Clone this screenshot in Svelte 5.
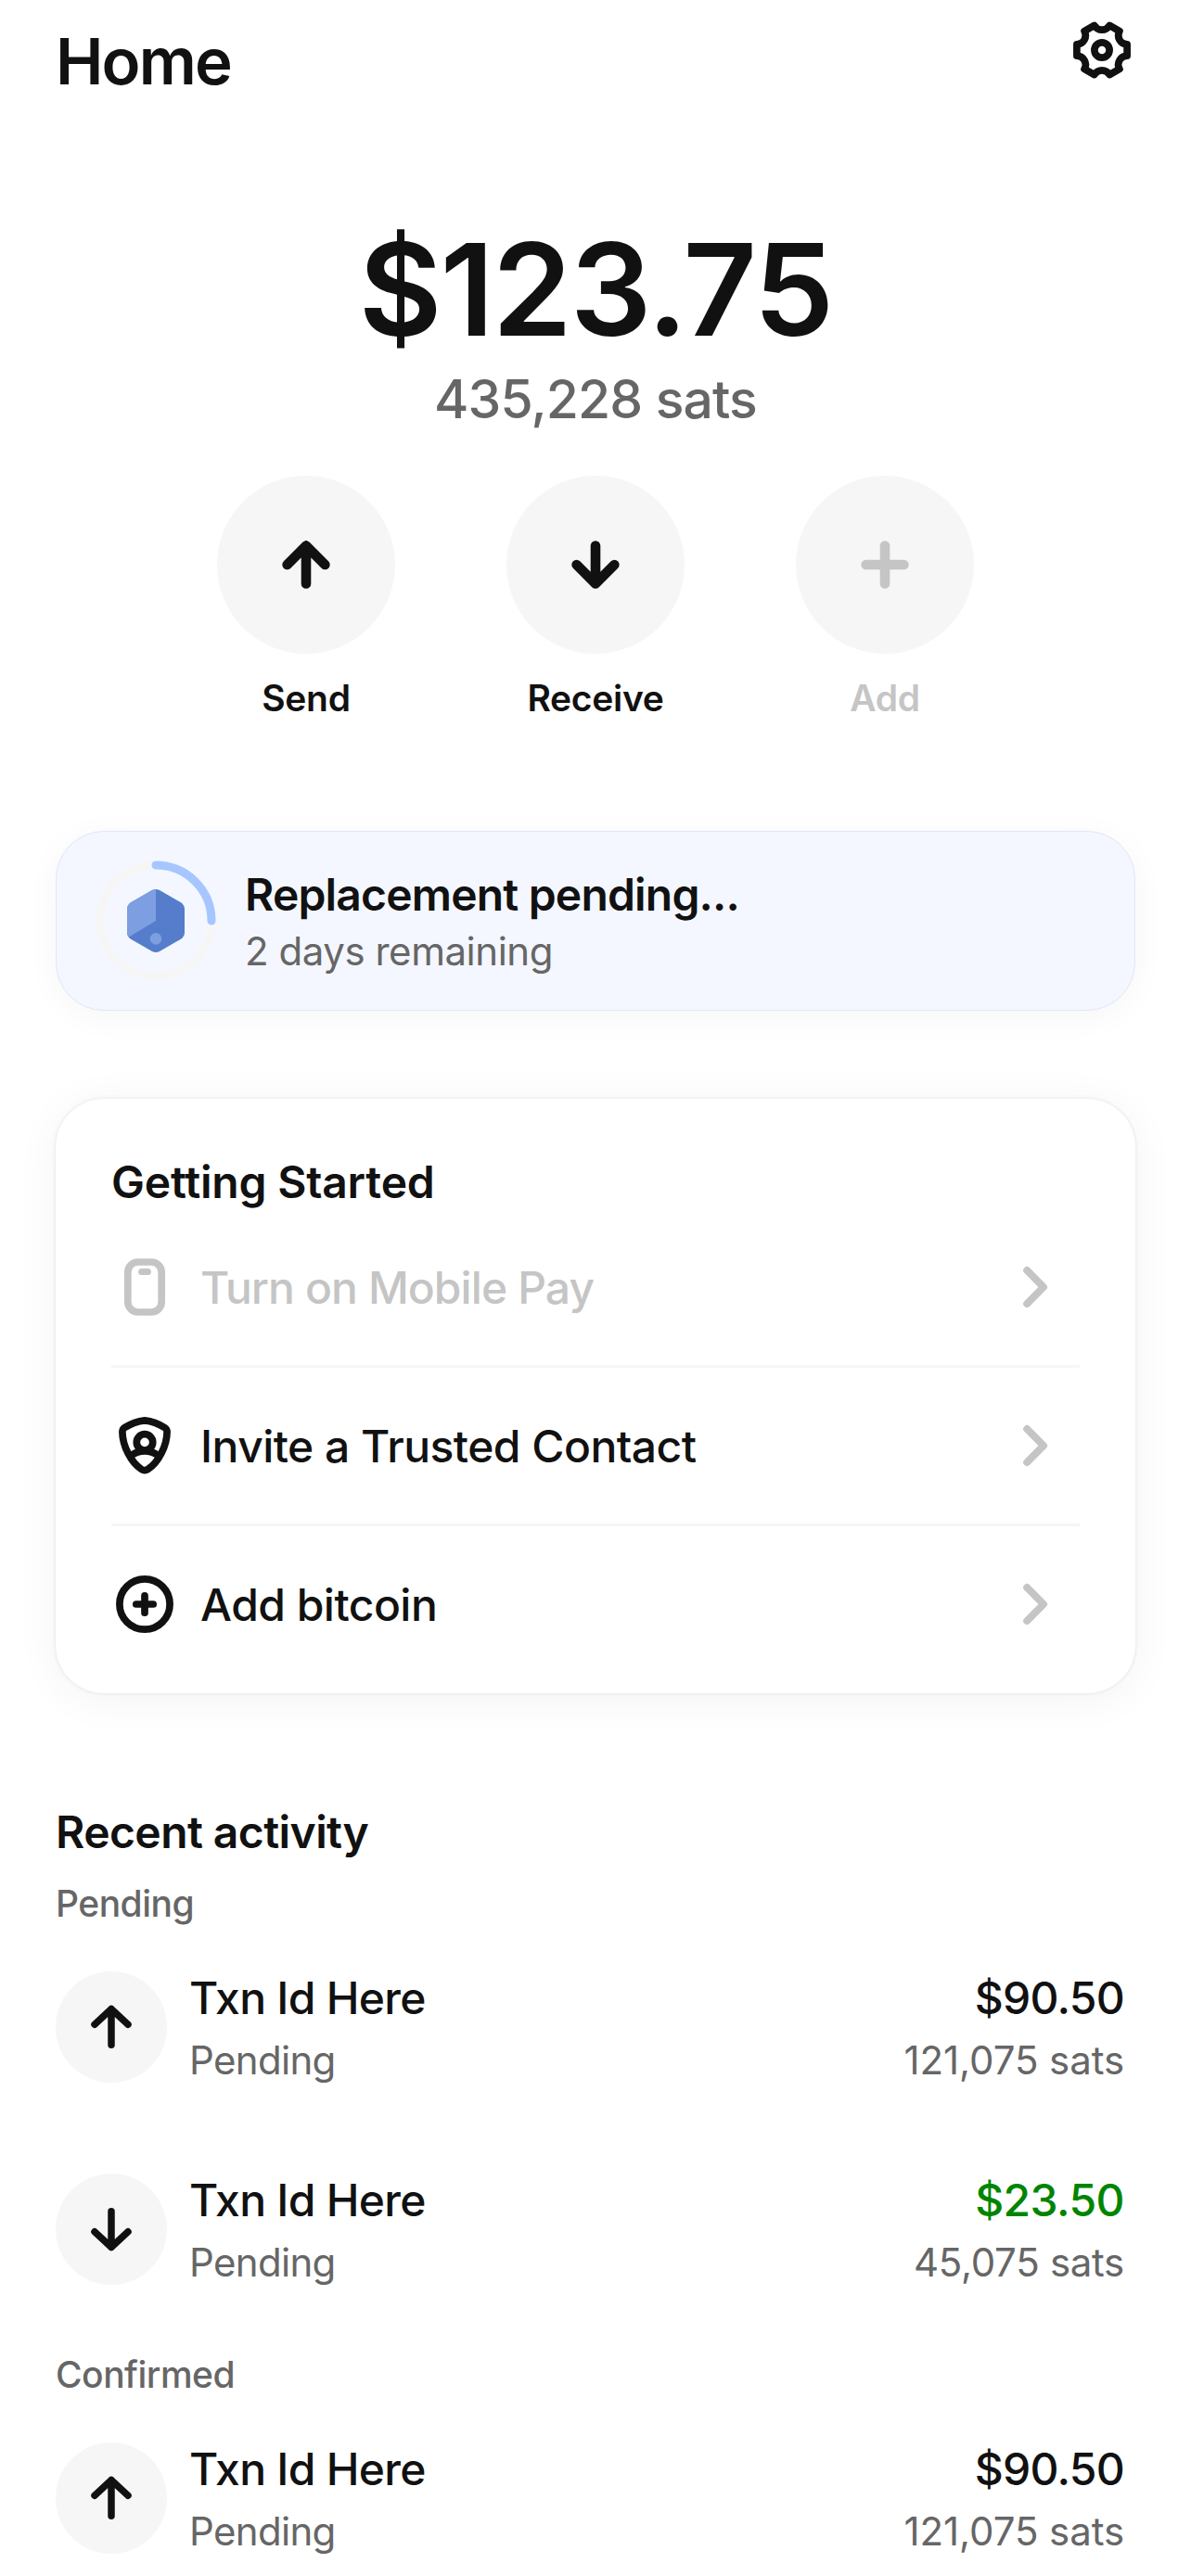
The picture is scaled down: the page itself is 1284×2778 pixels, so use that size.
<script>
  const steps = [
    { icon: 'phone', label: 'Turn on Mobile Pay', disabled: true },
    { icon: 'shield', label: 'Invite a Trusted Contact', disabled: false },
    { icon: 'plus', label: 'Add bitcoin', disabled: false }
  ];

  const actions = [
    { icon: 'up', label: 'Send', disabled: false },
    { icon: 'down', label: 'Receive', disabled: false },
    { icon: 'plus', label: 'Add', disabled: true }
  ];

  const groups = [
    {
      title: 'Pending',
      items: [
        { incoming: false, title: 'Txn Id Here', status: 'Pending', amount: '$90.50', sats: '121,075 sats' },
        { incoming: true, title: 'Txn Id Here', status: 'Pending', amount: '$23.50', sats: '45,075 sats' }
      ]
    },
    {
      title: 'Confirmed',
      items: [
        { incoming: false, title: 'Txn Id Here', status: 'Pending', amount: '$90.50', sats: '121,075 sats' }
      ]
    }
  ];

  // Six-toothed gear outline, centred in a 72 unit box.
  function gear() {
    const parts = [];
    for (let i = 0; i < 6; i++) {
      const a = (i * Math.PI) / 3;
      const at = (x, y) =>
        `${(36 + x * Math.cos(a) - y * Math.sin(a)).toFixed(2)} ${(36 + x * Math.sin(a) + y * Math.cos(a)).toFixed(2)}`;
      const start = at(27.1, -6.2);
      parts.push(i === 0 ? `M${start}` : `A9.5 9.5 0 0 0 ${start}`);
      parts.push(`L${at(27.1, 6.2)}`);
    }
    parts.push('A9.5 9.5 0 0 0 63.1 29.8Z');
    return parts.join('');
  }
</script>

<main>
  <header>
    <h1>Home</h1>
    <svg class="settings" viewBox="0 0 72 72">
      <path d={gear()} />
      <circle cx="36" cy="36" r="8.1" />
    </svg>
  </header>

  <section class="balance">
    <div class="fiat">$123.75</div>
    <div class="sats">435,228 sats</div>
  </section>

  <nav>
    {#each actions as action}
      <div class="action" class:disabled={action.disabled}>
        <span class="disc">
          <svg viewBox="0 0 72 72">
            {#if action.icon === 'up'}
              <path d="M36 56.4V15.6M15.6 36 36 15.6 56.4 36" />
            {:else if action.icon === 'down'}
              <path d="M36 15.6V56.4M15.6 36 36 56.4 56.4 36" />
            {:else}
              <path d="M36 15.6V56.4M15.6 36H56.4" />
            {/if}
          </svg>
        </span>
        <span class="caption">{action.label}</span>
      </div>
    {/each}
  </nav>

  <section class="notice">
    <svg class="progress" viewBox="0 0 130 130">
      <circle class="track" cx="65" cy="65" r="60" />
      <path class="arc" d="M65 5A60 60 0 0 1 125 65" />
      <path class="hex" d="M61 32.1Q65 30 69 32.1L92 45.3Q96 48 96 52.5V77.5Q96 82 92 84.7L69 97.9Q65 100 61 97.9L38 84.7Q34 82 34 77.5V52.5Q34 48 38 45.3L61 32.1Z" />
      <path class="facet" d="M65 65V31Q62.8 31 61 32.1L38 45.3Q34 48 34 52.5V77.5Q34 80.2 36.3 82.2Z" />
      <circle class="facet" cx="65" cy="84.4" r="6.3" />
    </svg>
    <div class="notice-text">
      <strong>Replacement pending...</strong>
      <span>2 days remaining</span>
    </div>
  </section>

  <section class="card">
    <h2>Getting Started</h2>
    <ul>
      {#each steps as step}
        <li class:disabled={step.disabled}>
          <svg class="glyph" viewBox="0 0 72 72">
            {#if step.icon === 'phone'}
              <rect x="17.8" y="9" width="36.4" height="54" rx="11" />
              <path class="slot" d="M32.6 19.4H39.4" />
            {:else if step.icon === 'shield'}
              <path d="M36 8.8C28.5 9.6 20 13 14.4 16.6Q12 18.2 11.9 21C12 36 21 54 32.6 61.6Q36 63.8 39.4 61.6C51 54 60 36 60.1 21Q60 18.2 57.6 16.6C52 13 43.5 9.6 36 8.8Z" />
              <circle cx="36" cy="32.4" r="8.7" />
              <path d="M21.5 46.5Q28 41.8 36 41.8T50.5 46.5" />
            {:else}
              <circle cx="36" cy="36" r="27.1" />
              <path d="M36 26.8V45.2M26.8 36H45.2" />
            {/if}
          </svg>
          <span class="step">{step.label}</span>
          <svg class="chevron" viewBox="0 0 72 72">
            <path d="M27.2 18 45 36 27.2 54" />
          </svg>
        </li>
      {/each}
    </ul>
  </section>

  <section class="activity">
    <h2>Recent activity</h2>
    {#each groups as group}
      <h3>{group.title}</h3>
      {#each group.items as item}
        <div class="txn">
          <span class="disc">
            <svg viewBox="0 0 72 72">
              {#if item.incoming}
                <path d="M36 16.7V55.5M18 38.8 36 55.5 54 38.8" />
              {:else}
                <path d="M36 55.3V16.5M18 33.2 36 16.5 54 33.2" />
              {/if}
            </svg>
          </span>
          <div class="lines">
            <span class="primary">{item.title}</span>
            <span class="secondary">{item.status}</span>
          </div>
          <div class="lines end" class:incoming={item.incoming}>
            <span class="primary">{item.amount}</span>
            <span class="secondary">{item.sats}</span>
          </div>
        </div>
      {/each}
    {/each}
  </section>
</main>

<style>
  :global(body) {
    background: #fff;
    overflow: hidden;
  }

  main {
    box-sizing: border-box;
    width: 1284px;
    height: 2778px;
    overflow: hidden;
    padding: 18px 60px 0;
    font-family: Inter, 'Liberation Sans', sans-serif;
    color: #111;
    white-space: nowrap;
  }

  h1,
  h2,
  h3,
  ul {
    margin: 0;
    padding: 0;
    font-weight: 600;
  }

  svg {
    display: block;
    fill: none;
    stroke: currentColor;
    stroke-linecap: round;
    stroke-linejoin: round;
  }

  header {
    display: flex;
    justify-content: space-between;
    height: 90px;
  }

  h1 {
    margin-top: 6px;
    font-size: 69px;
    line-height: 84px;
    letter-spacing: -0.027em;
  }

  .settings {
    width: 72px;
    height: 72px;
    stroke-width: 7.7;
  }

  .balance {
    margin-top: 122px;
    text-align: center;
  }

  .fiat {
    font-size: 138px;
    font-weight: 600;
    line-height: 164px;
    letter-spacing: -0.015em;
  }

  .sats {
    padding-top: 1px;
    font-size: 57px;
    font-weight: 500;
    line-height: 72px;
    letter-spacing: -0.015em;
    color: #666;
  }

  nav {
    display: flex;
    justify-content: center;
    gap: 120px;
    margin-top: 46px;
  }

  .action {
    display: flex;
    flex-direction: column;
    align-items: center;
    width: 192px;
  }

  .disc {
    display: flex;
    align-items: center;
    justify-content: center;
    flex: none;
    border-radius: 50%;
    background: #f6f6f6;
  }

  .disc svg {
    width: 72px;
    height: 72px;
  }

  .action .disc {
    width: 192px;
    height: 192px;
  }

  .action .disc svg {
    stroke-width: 10.6;
  }

  .caption {
    margin-top: 18px;
    font-size: 39px;
    font-weight: 600;
    line-height: 60px;
    letter-spacing: -0.008em;
  }

  .disabled {
    color: #c5c5c5;
  }

  .notice {
    box-sizing: border-box;
    display: flex;
    align-items: center;
    gap: 31px;
    height: 194px;
    margin-top: 113px;
    padding-left: 42px;
    border: 1px solid #dfe7f7;
    border-radius: 52px;
    background: #f4f7ff;
    box-shadow: 0 6px 36px rgba(0, 0, 0, 0.04);
  }

  .progress {
    width: 130px;
    height: 130px;
  }

  .track {
    stroke: #f6f6f6;
    stroke-width: 9;
  }

  .arc {
    stroke: #a6c6ff;
    stroke-width: 9;
  }

  .hex {
    fill: #557dcc;
    stroke: none;
  }

  .facet {
    fill: #7d9fe1;
    stroke: none;
  }

  .notice-text {
    display: flex;
    flex-direction: column;
    margin-top: 4px;
    line-height: 61px;
  }

  .notice-text strong {
    font-size: 48px;
    font-weight: 600;
    letter-spacing: -0.017em;
  }

  .notice-text span {
    font-size: 42px;
    letter-spacing: -0.011em;
    color: #666;
  }

  .card {
    box-sizing: border-box;
    height: 641px;
    margin-top: 95px;
    padding: 60px 60px 12px;
    border-radius: 52px;
    background: #fff;
    box-shadow:
      0 0 4px rgba(0, 0, 0, 0.1),
      0 6px 48px rgba(0, 0, 0, 0.05);
  }

  .card h2 {
    font-size: 48px;
    line-height: 59px;
    letter-spacing: -0.004em;
  }

  li {
    display: flex;
    align-items: center;
    height: 168px;
    list-style: none;
  }

  li + li {
    border-top: 3px solid #f6f6f6;
  }

  .glyph {
    width: 72px;
    height: 72px;
    stroke-width: 7.7;
  }

  .slot {
    stroke-width: 7;
  }

  .step {
    flex: 1;
    margin-left: 24px;
    font-size: 48px;
    font-weight: 500;
    letter-spacing: -0.011em;
  }

  .disabled .step {
    letter-spacing: -0.019em;
  }

  .chevron {
    width: 72px;
    height: 72px;
    margin-right: 12px;
    stroke: #c5c5c5;
    stroke-width: 8;
  }

  .activity {
    margin-top: 114px;
  }

  .activity h2 {
    font-size: 48px;
    line-height: 71px;
    letter-spacing: -0.012em;
  }

  h3 {
    margin-top: 12px;
    font-size: 39px;
    font-weight: 500;
    line-height: 59px;
    letter-spacing: -0.013em;
    color: #666;
  }

  .txn + h3 {
    margin-top: 13px;
  }

  .txn {
    display: flex;
    align-items: center;
    padding: 35px 12px 45px 0;
  }

  .txn .disc {
    width: 120px;
    height: 120px;
  }

  .txn .disc svg {
    stroke-width: 7.5;
  }

  .lines {
    display: flex;
    flex: 1;
    flex-direction: column;
    margin-left: 24px;
    padding-top: 4px;
    line-height: 67px;
  }

  .end {
    text-align: right;
  }

  .primary {
    font-size: 48px;
    font-weight: 500;
    letter-spacing: -0.015em;
  }

  .secondary {
    font-size: 42px;
    color: #666;
    letter-spacing: -0.016em;
  }

  .end .secondary {
    letter-spacing: -0.002em;
  }

  .incoming .primary {
    color: #008500;
    letter-spacing: -0.012em;
  }

  .incoming .secondary {
    letter-spacing: -0.007em;
  }
</style>
